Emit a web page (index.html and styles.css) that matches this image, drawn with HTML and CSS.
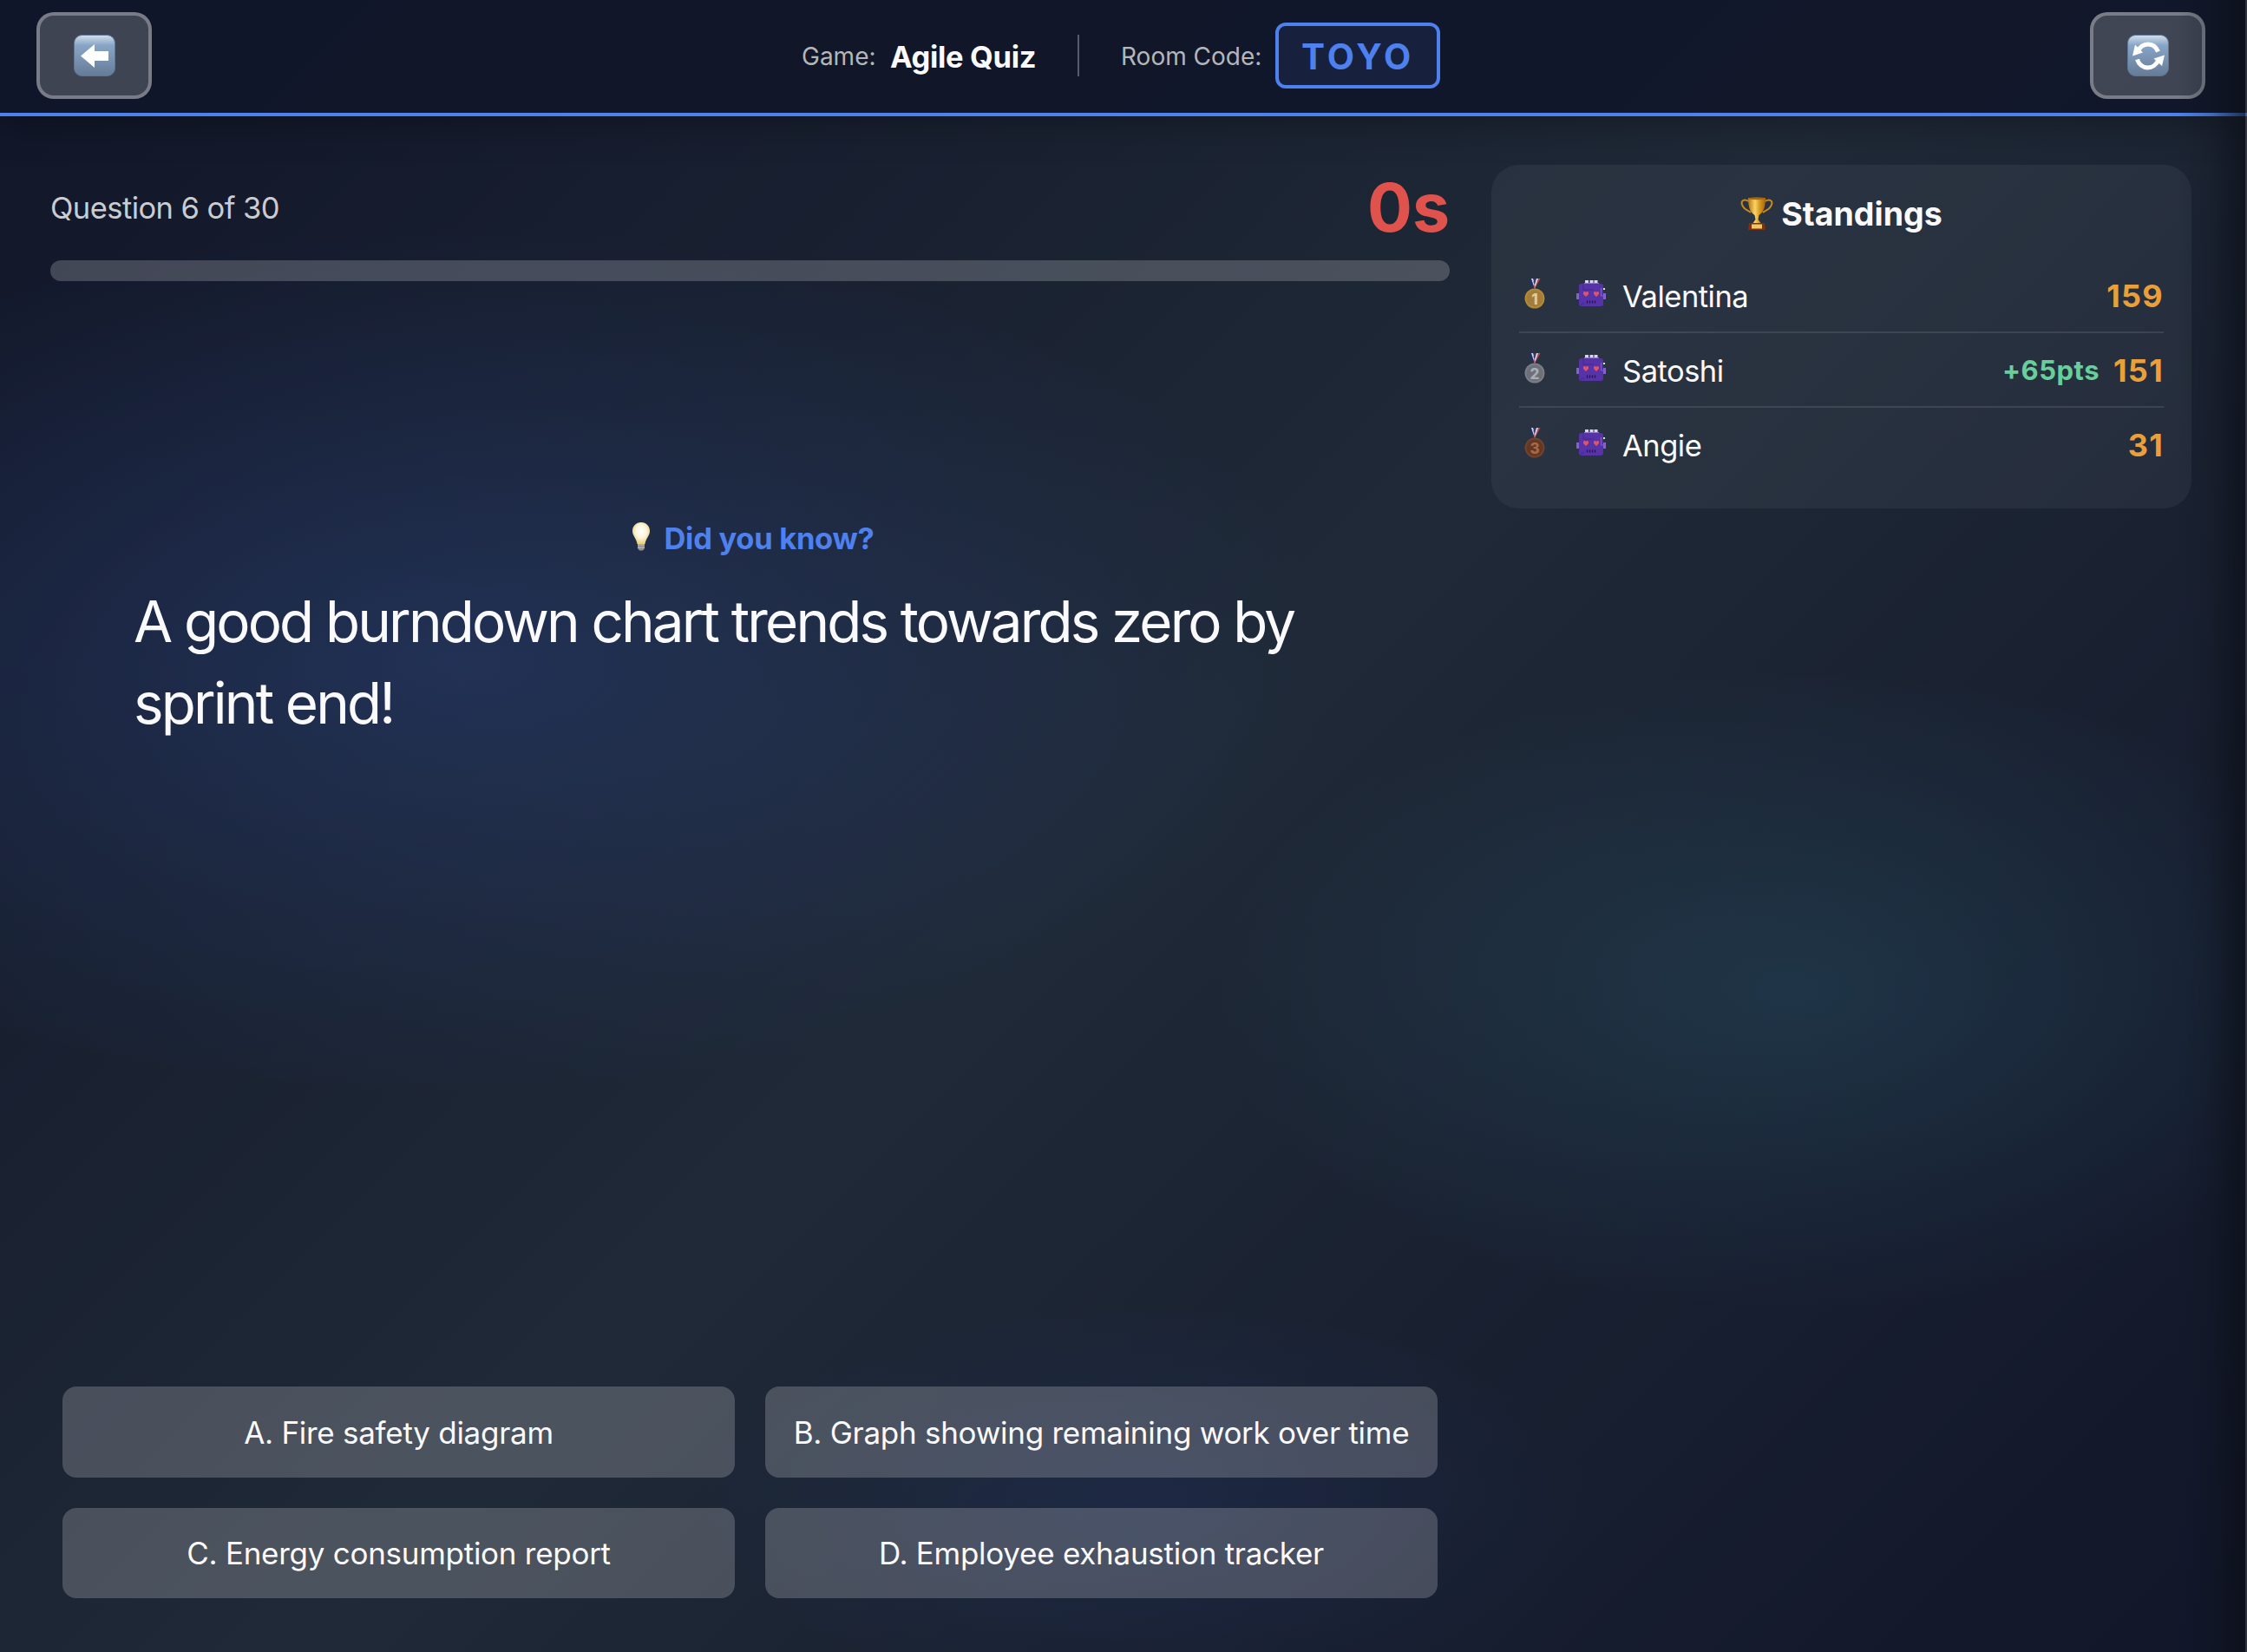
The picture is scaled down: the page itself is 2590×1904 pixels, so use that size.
FILE: index.html
```html
<!doctype html>
<html lang="en">
<head>
    <meta charset="utf-8">
    <title>Agile Quiz</title>
    <link rel="stylesheet" href="styles.css">
</head>
<body>
<svg class="defs" width="0" height="0">
    <defs>
        <linearGradient id="key" x1="0" y1="0" x2="0" y2="1">
            <stop offset="0" stop-color="#d3deea"/>
            <stop offset=".25" stop-color="#88a5c7"/>
            <stop offset=".6" stop-color="#7892b0"/>
            <stop offset="1" stop-color="#657b96"/>
        </linearGradient>
        <linearGradient id="gold" x1="0" y1="0" x2="1" y2="0">
            <stop offset="0" stop-color="#b87413"/>
            <stop offset=".4" stop-color="#f8d46a"/>
            <stop offset=".65" stop-color="#d99a1e"/>
            <stop offset="1" stop-color="#a8650e"/>
        </linearGradient>
        <radialGradient id="glow" cx=".5" cy=".42" r=".55">
            <stop offset="0" stop-color="#ffffff"/>
            <stop offset=".55" stop-color="#fbf5dc"/>
            <stop offset="1" stop-color="#ecd27c"/>
        </radialGradient>
        <symbol id="ribbon" viewBox="0 0 24 12">
            <path d="M5.500 0H9L13 12H11Z" fill="#252d70"/>
            <path d="M8 0H10L13 9L12 12Z" fill="#d8d8e4"/>
            <path d="M18.500 0H14L11 9L12 12Z" fill="#b2494d"/>
            <path d="M14 0H11.500L10.500 4L12 8Z" fill="#33397d"/>
            <path d="M16 0H14L12 7L12.500 10Z" fill="#d8d8e4"/>
        </symbol>
        <symbol id="robot" viewBox="0 0 34 30">
            <path d="M10 0h4v3h-4zM15.500 0h4v3h-4zM20.500 0h4v3h-4z" fill="#dcd3f0"/>
            <path d="M9 3h17v2H9z" fill="#8f78cc"/>
            <path d="M0 15h4v7H0zM30 15h4v7h-4z" fill="#8065c4"/>
            <rect x="3" y="4" width="28" height="26" rx="3" fill="#5733a8"/>
            <path d="M8 5v6h12M6 29v-2h3" fill="none" stroke="#482694" stroke-width="1"/>
            <path d="M28.500 9v9h4" fill="none" stroke="#8065c4" stroke-width="1"/>
            <rect x="31" y="9" width="2" height="2" fill="#d6e5dc"/>
            <path d="M11 19L8 16v-2l1-1h1l1 1 1-1h1l1 1v2zM23 19l-3-3v-2l1-1h1l1 1 1-1h1l1 1v2z" fill="#dc5468"/>
            <path d="M12.500 23.500v3M15.500 23.500v3M18.500 23.500v3M21.500 23.500v3" stroke="#251447" stroke-width="1.300"/>
        </symbol>
    </defs>
</svg>

<header class="topbar">
    <button class="icon-btn">
        <svg width="48" height="48" viewBox="0 0 48 48">
            <rect x=".5" y=".5" width="47" height="47" rx="9" fill="url(#key)" stroke="#5d7798"/>
            <path d="M8 24.500L24 11v8h16v11H24v8z" fill="#fff"/>
        </svg>
    </button>
    <div class="info">
        <span class="label game-label">Game:</span>
        <span class="game">Agile Quiz</span>
        <span class="divider"></span>
        <span class="label room-label">Room Code:</span>
        <span class="code">TOYO</span>
    </div>
    <button class="icon-btn">
        <svg width="48" height="48" viewBox="0 0 48 48">
            <rect x=".5" y=".5" width="47" height="47" rx="9" fill="url(#key)" stroke="#5d7798"/>
            <path d="M12 19.500C17 8 31 8 35.500 19.500M36 29C31 41 15.500 41 11.500 28.500" fill="none" stroke="#fff" stroke-width="5"/>
            <path d="M9 11.500L18 20.500L6 24.500ZM43 23.500L40 36L30.500 27.500Z" fill="#fff"/>
        </svg>
    </button>
</header>

<main class="layout">
    <section class="quiz">
        <div class="status">
            <span class="count">Question 6 of 30</span>
            <span class="timer">0s</span>
        </div>
        <div class="progress"></div>
        <div class="fact">
            <h2 class="fact-title">
                <svg width="20" height="33" viewBox="0 0 20 33">
                    <path d="M10 0C4 0 0 4.500 0 10c0 5.500 4.500 8 5.500 15h9C15.500 18 20 15.500 20 10 20 4.500 16 0 10 0z" fill="url(#glow)"/>
                    <path d="M6 25h8v5l-2 2.500H8L6 30z" fill="#8e8e8e"/>
                    <path d="M6 26h8M6 29h8" stroke="#c9c9c9"/>
                </svg>
                <span>Did you know?</span>
            </h2>
            <p class="fact-text">A good burndown chart trends towards zero by<br>sprint end!</p>
        </div>
        <div class="answers">
            <button class="answer">A. Fire safety diagram</button>
            <button class="answer">B. Graph showing remaining work over time</button>
            <button class="answer">C. Energy consumption report</button>
            <button class="answer">D. Employee exhaustion tracker</button>
        </div>
    </section>

    <aside class="standings">
        <h3 class="standings-title">
            <svg width="38" height="39" viewBox="0 0 38 39">
                <path d="M10 5C2 1 0 6 3 11c2 4 6 4 9 7M28 5c8-4 10 1 7 6-2 4-6 4-9 7" fill="none" stroke="#c98a1d" stroke-width="2"/>
                <path d="M9 1h20c0 12-3 17-7.500 20l-1 5 3 4h-9l3-4-1-5C12 18 9 13 9 1z" fill="url(#gold)"/>
                <ellipse cx="19" cy="1.800" rx="10" ry="1.500" fill="#a5670f"/>
                <path d="M10 30h18l1 8H9z" fill="#7b3010"/>
                <path d="M13 31.500h12v5H13z" fill="#f0c767"/>
            </svg>
            <span>Standings</span>
        </h3>
        <ul class="rows">
            <li class="row">
                <svg class="medal" width="24" height="35" viewBox="0 0 24 35">
                    <use href="#ribbon" width="24" height="12"/>
                    <circle cx="12" cy="23" r="11.500" fill="#b08a35"/>
                    <circle cx="12" cy="23" r="9.500" fill="#a67c3a"/>
                    <text class="place" x="12" y="29.500" fill="#ddcf91">1</text>
                </svg>
                <svg class="robot" width="34" height="30"><use href="#robot"/></svg>
                <span class="name">Valentina</span>
                <span class="score">159</span>
            </li>
            <li class="row">
                <svg class="medal" width="24" height="35" viewBox="0 0 24 35">
                    <use href="#ribbon" width="24" height="12"/>
                    <circle cx="12" cy="23" r="11.500" fill="#7b7e85"/>
                    <circle cx="12" cy="23" r="9.500" fill="#6d7078"/>
                    <text class="place" x="12" y="29.500" fill="#abaeb5">2</text>
                </svg>
                <svg class="robot" width="34" height="30"><use href="#robot"/></svg>
                <span class="name">Satoshi</span>
                <span class="gain">+65pts</span>
                <span class="score">151</span>
            </li>
            <li class="row">
                <svg class="medal" width="24" height="35" viewBox="0 0 24 35">
                    <use href="#ribbon" width="24" height="12"/>
                    <circle cx="12" cy="23" r="11.500" fill="#70422f"/>
                    <circle cx="12" cy="23" r="9.500" fill="#653722"/>
                    <text class="place" x="12" y="29.500" fill="#a66a45">3</text>
                </svg>
                <svg class="robot" width="34" height="30"><use href="#robot"/></svg>
                <span class="name">Angie</span>
                <span class="score">31</span>
            </li>
        </ul>
    </aside>
</main>
<div class="edge"></div>
</body>
</html>
```
FILE: styles.css
```css
*{margin:0;padding:0;box-sizing:border-box;}
body{
    width:2590px;height:1904px;overflow:hidden;position:relative;
    display:flex;flex-direction:column;
    font-family:Inter,"Liberation Sans",sans-serif;color:#fafafc;
    background:
        radial-gradient(ellipse 1020px 500px at 20% 40%,rgba(70,120,240,.19) 0%,rgba(70,120,240,0) 100%),
        radial-gradient(ellipse 680px 370px at 80% 60%,rgba(70,185,215,.13) 0%,rgba(70,185,215,0) 100%),
        radial-gradient(ellipse 520px 230px at 51% 91%,rgba(62,100,246,.09) 0%,rgba(62,100,246,0) 100%),
        linear-gradient(135deg,#111629 0%,#1f2937 50%,#111629 100%);
}
button{font:inherit;color:inherit;border:0;}
svg{display:block;flex:none;}
.defs{position:absolute;}

/* top bar */
.topbar{height:134px;flex:none;display:flex;align-items:flex-start;justify-content:space-between;padding:14px 48px 0 42px;background:rgba(17,22,41,.9);border-bottom:4px solid #4e81ee;box-shadow:0 8px 40px rgba(0,0,0,.3);}
.icon-btn{width:133px;height:100px;display:flex;align-items:center;justify-content:center;background:rgba(255,255,255,.2);border:4px solid rgba(255,255,255,.3);border-radius:20px;}
.info{height:76px;margin-top:12px;display:flex;align-items:center;white-space:nowrap;}
.label{font-size:28px;color:#b4b6bb;padding-top:2px;}
.game-label{width:102px;}
.game{width:168px;padding-top:2px;font-size:34.500px;font-weight:700;letter-spacing:-.35px;}
.divider{width:2px;height:48px;margin:0 48px;background:rgba(255,255,255,.3);}
.room-label{width:178px;}
.code{width:190px;height:76px;padding-left:26px;line-height:71px;font-size:40.500px;font-weight:700;letter-spacing:4px;color:#4e81ee;background:rgba(78,129,238,.1);border:4px solid #4e81ee;border-radius:12px;}

/* quiz */
.layout{flex:1;display:flex;align-items:flex-start;gap:48px;padding:56px 64px 62px 58px;}
.quiz{width:1613px;height:1652px;display:flex;flex-direction:column;}
.status{height:110px;display:flex;justify-content:space-between;align-items:center;padding-bottom:12px;}
.count{font-size:34.500px;letter-spacing:-.55px;color:#cbccd0;}
.timer{font-size:77px;font-weight:700;color:#e0534d;}
.progress{height:24px;flex:none;border-radius:12px;background:rgba(255,255,255,.2);}
.fact{flex:1;padding:268px 96px 0;}
.fact-title{display:flex;align-items:center;justify-content:center;gap:16px;height:56px;padding-left:8px;font-size:34.500px;font-weight:700;letter-spacing:-.3px;color:#4e81ee;}
.fact-title svg{margin-top:-4px;}
.fact-text{margin-top:22px;font-size:65.500px;line-height:94px;letter-spacing:-2.850px;white-space:nowrap;}
.answers{display:grid;grid-template-columns:775px 775px;grid-template-rows:105px 104px;gap:35px;padding-left:14px;}
.answer{border-radius:16px;background:rgba(255,255,255,.2);font-size:35px;letter-spacing:-.270px;white-space:nowrap;}

/* standings */
.standings{width:807px;height:396px;padding:32px;border-radius:32px;background:rgba(255,255,255,.05);}
.standings-title{height:48px;display:flex;align-items:center;justify-content:center;gap:9px;font-size:37.500px;font-weight:700;}
.rows{list-style:none;margin-top:28px;}
.row{height:86px;display:flex;align-items:center;border-bottom:2px solid rgba(255,255,255,.1);font-size:34.500px;}
.row:last-child{border-bottom:0;height:84px;}
.medal{margin:-4px 0 0 6px;}
.robot{margin:-4px 19px 0 36px;}
.place{font-size:17px;font-weight:800;text-anchor:middle;}
.name{margin-right:auto;padding-top:2px;letter-spacing:-.5px;}
.gain{padding-top:1px;font-size:31px;font-weight:700;letter-spacing:.500px;color:#67cf9c;margin-right:16px;}
.score{padding-top:2px;font-size:36px;font-weight:700;letter-spacing:1.300px;color:#e9a03b;}

/* shade along the right side */
.edge{position:absolute;top:0;right:0;width:80px;height:100%;background:linear-gradient(90deg,transparent,rgba(13,17,26,.22) 50%,rgba(11,14,22,.7));border-right:2px solid rgba(70,70,78,.6);}
```
